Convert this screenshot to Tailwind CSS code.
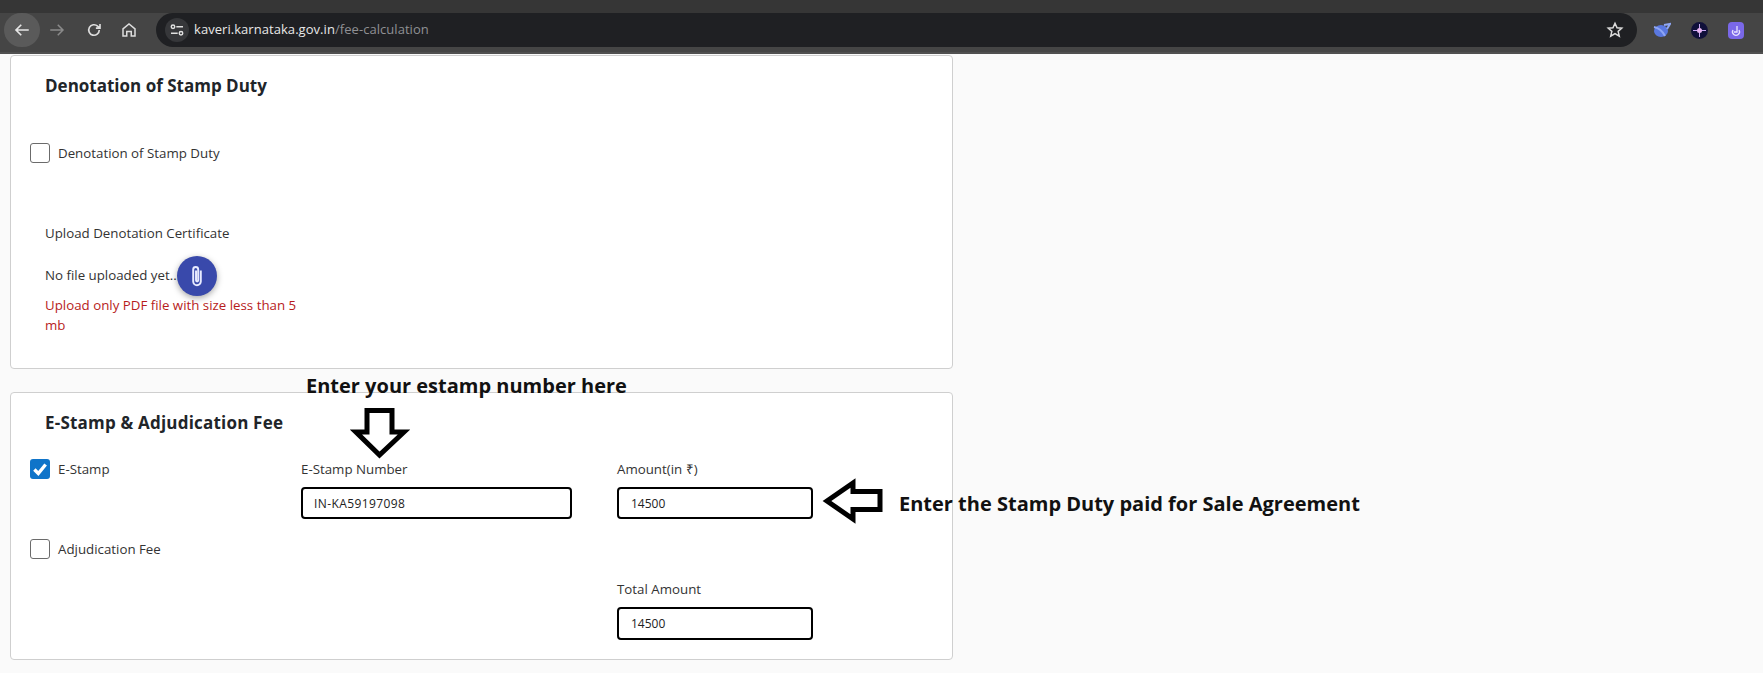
<!DOCTYPE html>
<html lang="en">

<head>
    <meta charset="UTF-8">
    <meta name="viewport" content="width=device-width, initial-scale=1.0">
    <title>Fee Calculation</title>
    <script src="https://cdn.jsdelivr.net/npm/@tailwindcss/browser@4"></script>
</head>

<body class="relative w-[1763px] h-[673px] overflow-hidden bg-[#fafafa] font-['Open_Sans',sans-serif] text-[#333333]">
    <!-- Browser bar -->
    <header class="h-[54px] bg-[#363636] pt-[13px]">
        <div class="h-[41px] bg-[#454545] flex items-start pl-[4px] border-b-[2px] border-[#505050]">
            <div class="w-[36px] h-[34px] rounded-full bg-[#5a5a5a] flex items-center justify-center">
                <svg class="w-[18px] h-[18px]" viewBox="0 0 24 24" fill="none" stroke="#e6e6e6" stroke-width="2.2"><path d="M21 12H4M11 5l-7 7 7 7" /></svg>
            </div>
            <div class="w-[34px] h-[34px] flex items-center justify-center">
                <svg class="w-[18px] h-[18px]" viewBox="0 0 24 24" fill="none" stroke="#8a8a8a" stroke-width="2"><path d="M3 12h17M13 5l7 7-7 7" /></svg>
            </div>
            <div class="w-[40px] h-[34px] flex items-center justify-center">
                <svg class="w-[18px] h-[18px]" viewBox="0 0 24 24" fill="none" stroke="#dddddd" stroke-width="2.2"><path d="M19 12a7 7 0 1 1-2.2-5.1L20 9.5M20 4v5.5h-5.5" /></svg>
            </div>
            <div class="w-[30px] h-[34px] flex items-center justify-center">
                <svg class="w-[18px] h-[18px]" viewBox="0 0 24 24" fill="none" stroke="#dddddd" stroke-width="2"><path d="M4 10.500 12 4l8 6.500V20h-5v-6H9v6H4z" /></svg>
            </div>
            <div class="ml-[12px] w-[1481px] h-[34px] rounded-full bg-[#1f2023] flex items-center pl-[9px] pr-[13px]">
                <div class="w-[24px] h-[24px] rounded-full bg-[#36373a] flex items-center justify-center">
                    <svg class="w-[16px] h-[16px]" viewBox="0 0 24 24" fill="none" stroke="#e0e0e0" stroke-width="2.2"><path d="M11 7h10M3 17h10" /><circle cx="6" cy="7" r="2.6" /><circle cx="18" cy="17" r="2.6" /></svg>
                </div>
                <span class="ml-[5px] text-[13px] tracking-[0.05px] text-[#e8e8e8]">kaveri.karnataka.gov.in<span class="text-[#8f9094]">/fee-calculation</span></span>
                <svg class="ml-auto w-[18px] h-[18px]" viewBox="0 0 24 24" fill="none" stroke="#dcdcdc" stroke-width="2"><path d="m12 3 2.700 6 6.300.6-4.800 4.200 1.500 6.400L12 16.800 6.300 20.200l1.500-6.400L3 9.600 9.300 9z" /></svg>
            </div>
            <div class="ml-[15px] w-[20px] h-[34px] flex items-center justify-center">
                <svg class="w-[18px] h-[16px]" viewBox="0 0 18 16"><ellipse cx="8" cy="9" rx="7" ry="6" fill="#5a78e0" /><path d="M1 5c5 1 9 5 11 9M11 3l6-1-3 5" fill="none" stroke="#8ea6f5" stroke-width="2" /></svg>
            </div>
            <div class="ml-[18px] w-[18px] h-[34px] flex items-center justify-center">
                <svg class="w-[17px] h-[17px]" viewBox="0 0 17 17"><circle cx="8.500" cy="8.500" r="8.500" fill="#10103a" /><path d="M8.500 2v13M2 8.500h13" stroke="#c9a8f5" stroke-width="1" /><circle cx="8.500" cy="8.500" r="2.500" fill="#e9b5f2" /></svg>
            </div>
            <div class="ml-[20px] w-[16px] h-[34px] flex items-center justify-center">
                <svg class="w-[16px] h-[17px]" viewBox="0 0 16 17"><rect width="16" height="17" rx="4" fill="#7a68e8" /><path d="M5 8a3.500 3.500 0 1 0 6 0M9 4v6H6" fill="none" stroke="#e7e2ff" stroke-width="1.300" /></svg>
            </div>
        </div>
    </header>

    <main class="w-[943px] ml-[10px] pt-[1px] flex flex-col gap-[23px]">
        <!-- Denotation card -->
        <section class="h-[314px] bg-white border border-[#cfcfcf] rounded-[4px] pl-[19px]">
            <h2 class="ml-[15px] mt-[18px] text-[17px] leading-[24px] font-bold text-[#212529]">Denotation of Stamp Duty</h2>
            <label class="mt-[45px] flex items-center h-[20px] gap-[8px] text-[13.300px]">
                <span class="w-[20px] h-[20px] rounded-[3px] border border-[#6b6b6b] bg-white"></span>
                <span class="mt-[1px]">Denotation of Stamp Duty</span>
            </label>
            <p class="ml-[15px] mt-[60px] text-[13.300px] leading-[20px]">Upload Denotation Certificate</p>
            <div class="ml-[15px] mt-[13px] flex items-center text-[13.300px]">
                <span class="w-[132px] whitespace-nowrap overflow-hidden">No file uploaded yet..</span>
                <span class="w-[40px] h-[40px] rounded-full bg-[#3949ab] shadow-[0_2px_6px_rgba(0,0,0,0.35)] flex items-center justify-center">
                    <svg class="w-[26px] h-[26px]" viewBox="0 0 24 24" fill="none" stroke="#e8ebff" stroke-width="1.800"><path d="M15.500 7v10a3.500 3.500 0 0 1-7 0V6a2.300 2.300 0 0 1 4.600 0v10a1 1 0 0 1-2 0V7" /></svg>
                </span>
            </div>
            <p class="ml-[15px] -mt-[1px] w-[256px] text-[13.300px] leading-[20px] text-[#b71c1c]">Upload only PDF file with size less than 5 mb</p>
        </section>

        <!-- E-Stamp card -->
        <section class="h-[268px] bg-white border border-[#cfcfcf] rounded-[4px] pl-[19px]">
            <h2 class="ml-[15px] mt-[18px] text-[17px] leading-[24px] font-bold tracking-[0.2px] text-[#212529]">E-Stamp &amp; Adjudication Fee</h2>
            <div class="mt-[24px] grid grid-cols-[271px_316px_196px]">
                <label class="flex items-center self-start h-[20px] gap-[8px] text-[13.300px]">
                    <span class="w-[20px] h-[20px] rounded-[3px] bg-[#0f74c9] flex items-center justify-center">
                        <svg class="w-[18px] h-[18px]" viewBox="0 0 16 16" fill="none" stroke="white" stroke-width="3"><path d="m3 8.500 3.500 3.500L13 4" /></svg>
                    </span>
                    <span class="mt-[1px]">E-Stamp</span>
                </label>
                <div>
                    <p class="text-[13.300px] leading-[20px] mb-[8px]">E-Stamp Number</p>
                    <input type="text" value="IN-KA59197098:" class="w-[271px] h-[32px] border-[2px] border-black rounded-[4px] bg-white pl-[11px] pr-[165px] text-[12px] tracking-[0.4px] text-[#222222]">
                </div>
                <div>
                    <p class="text-[13.300px] leading-[20px] mb-[8px]">Amount(in ₹)</p>
                    <input type="text" value="14500" class="w-[196px] h-[32px] border-[2px] border-black rounded-[4px] bg-white pl-[12px] text-[12px] text-[#222222]">
                </div>
                <label class="mt-[20px] flex items-center self-start h-[20px] gap-[8px] text-[13.300px]">
                    <span class="w-[20px] h-[20px] rounded-[3px] border border-[#6b6b6b] bg-white"></span>
                    <span class="mt-[1px]">Adjudication Fee</span>
                </label>
                <div></div>
                <div class="mt-[60px]">
                    <p class="text-[13.300px] leading-[20px] mb-[8px]">Total Amount</p>
                    <input type="text" value="14500" class="w-[196px] h-[33px] border-[2px] border-black rounded-[4px] bg-white pl-[12px] text-[12px] text-[#222222]">
                </div>
            </div>
        </section>
    </main>

    <!-- Annotations drawn over the screenshot -->
    <p class="absolute left-[306px] top-[371px] text-[20px] leading-[30px] font-bold text-[#111111] whitespace-nowrap">Enter your estamp number here</p>
    <svg class="absolute left-[350px] top-[406px]" width="60" height="54" viewBox="0 0 60 54" fill="none" stroke="black" stroke-width="5">
        <path d="M17 4.500H42V26H54L29.500 49 6 26H17Z" />
    </svg>
    <svg class="absolute left-[821px] top-[478px]" width="64" height="48" viewBox="0 0 64 48" fill="none" stroke="black" stroke-width="5">
        <path d="M59 13.500H32V5L6 23l26 18v-9.500H59Z" />
    </svg>
    <p class="absolute left-[899px] top-[489px] text-[20px] leading-[30px] font-bold text-[#111111] whitespace-nowrap">Enter the Stamp Duty paid for Sale Agreement</p>
</body>

</html>
